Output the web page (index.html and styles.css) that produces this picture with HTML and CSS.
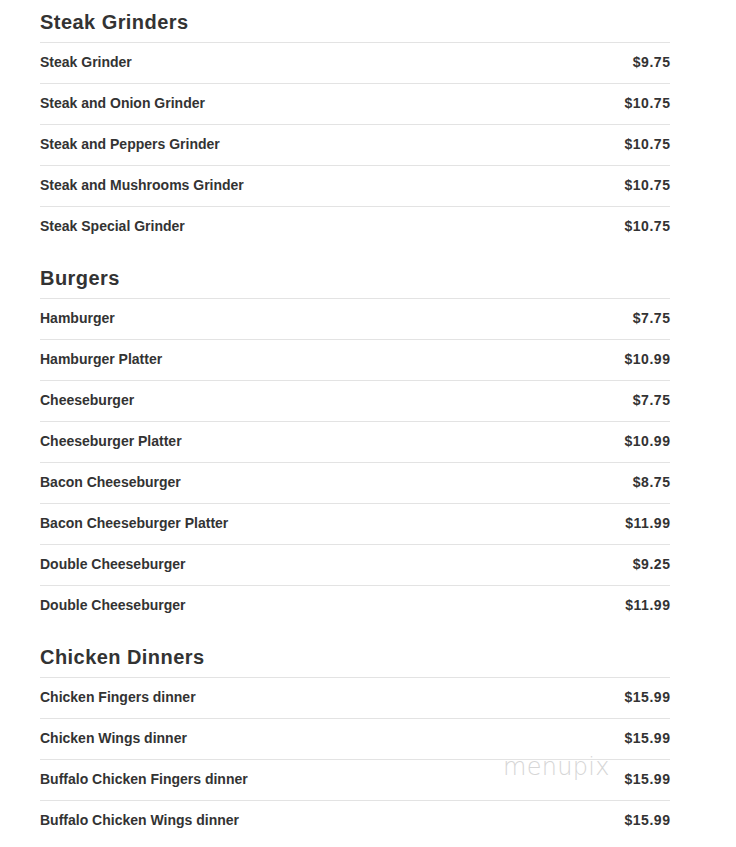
FILE: index.html
```html
<!DOCTYPE html>
<html>
<head>
<meta charset="utf-8">
<link rel="stylesheet" href="styles.css">
</head>
<body>
<div class="menu">
  <section class="section">
    <h2 class="heading">Steak Grinders</h2>
    <div class="row"><span>Steak Grinder</span><span class="price">$9.75</span></div>
    <div class="row"><span>Steak and Onion Grinder</span><span class="price">$10.75</span></div>
    <div class="row"><span>Steak and Peppers Grinder</span><span class="price">$10.75</span></div>
    <div class="row"><span>Steak and Mushrooms Grinder</span><span class="price">$10.75</span></div>
    <div class="row"><span>Steak Special Grinder</span><span class="price">$10.75</span></div>
  </section>
  <section class="section">
    <h2 class="heading">Burgers</h2>
    <div class="row"><span>Hamburger</span><span class="price">$7.75</span></div>
    <div class="row"><span>Hamburger Platter</span><span class="price">$10.99</span></div>
    <div class="row"><span>Cheeseburger</span><span class="price">$7.75</span></div>
    <div class="row"><span>Cheeseburger Platter</span><span class="price">$10.99</span></div>
    <div class="row"><span>Bacon Cheeseburger</span><span class="price">$8.75</span></div>
    <div class="row"><span>Bacon Cheeseburger Platter</span><span class="price">$11.99</span></div>
    <div class="row"><span>Double Cheeseburger</span><span class="price">$9.25</span></div>
    <div class="row"><span>Double Cheeseburger</span><span class="price">$11.99</span></div>
  </section>
  <section class="section">
    <h2 class="heading">Chicken Dinners</h2>
    <div class="row"><span>Chicken Fingers dinner</span><span class="price">$15.99</span></div>
    <div class="row"><span>Chicken Wings dinner</span><span class="price">$15.99</span></div>
    <div class="row"><span>Buffalo Chicken Fingers dinner</span><span class="price">$15.99</span></div>
    <div class="row"><span>Buffalo Chicken Wings dinner</span><span class="price">$15.99</span></div>
  </section>
</div>
<div class="watermark">menupix</div>
</body>
</html>
```
FILE: styles.css
```css
html, body {
  margin: 0;
  padding: 0;
  background: #fff;
}
body {
  font-family: "Liberation Sans", Arial, sans-serif;
  color: #333;
  position: relative;
  width: 736px;
  height: 847px;
  overflow: hidden;
}
.menu {
  margin-left: 40px;
  width: 630px;
}
.section {
  margin-bottom: 9px;
}
.heading {
  margin: 0;
  padding: 11px 0 9px;
  font-size: 20px;
  line-height: 22px;
  font-weight: bold;
  letter-spacing: 0.45px;
  color: #333;
}
.row {
  display: flex;
  justify-content: space-between;
  border-top: 1px solid #e3e3e3;
  padding: 9px 0 11px;
  font-size: 14px;
  line-height: 20px;
  font-weight: bold;
  color: #333;
}
.price {
  letter-spacing: 0.55px;
  margin-right: -0.55px;
}
.watermark {
  position: absolute;
  left: 503px;
  top: 752px;
  font-family: "DejaVu Sans", sans-serif;
  font-weight: 200;
  font-size: 24px;
  letter-spacing: 0.3px;
  color: #d6d6d6;
  line-height: 30px;
}
```
